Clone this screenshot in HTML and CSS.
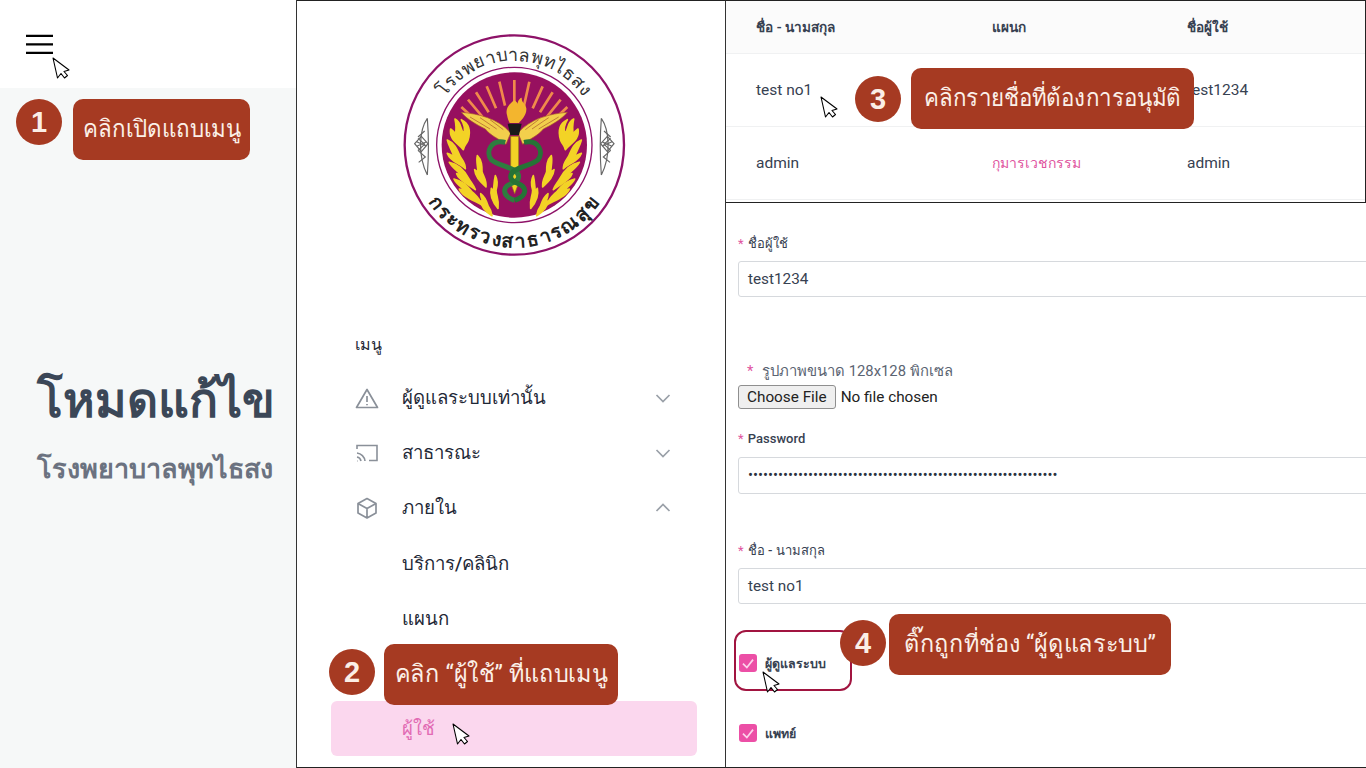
FILE: index.html
```html
<!DOCTYPE html>
<html lang="th">
<head>
<meta charset="utf-8">
<title>โหมดแก้ไข</title>
<link rel="stylesheet" href="styles.css">
</head>
<body>
<div class="page">
  <section class="left">
    <header class="left-top">
      <svg class="burger" viewBox="0 0 28 20"><path d="M0 2h28M0 11h28M0 19.700h28" stroke="#000" stroke-width="2.400" fill="none"/></svg>
    </header>
    <div class="left-body">
      <h1 class="mode-title">โหมดแก้ไข</h1>
      <p class="mode-sub">โรงพยาบาลพุทไธสง</p>
    </div>
  </section>

  <section class="middle">
    <div class="logo-wrap">
      <svg class="logo" viewBox="0 0 750 720">
        <defs>
          <path id="arcTop" d="M 120 360 A 253 253 0 0 1 626 360"/>
          <path id="arcBottom" d="M 62 390 A 313 313 0 0 0 684 390"/>
          <g id="flameSide" fill="#f3d326" stroke="#f3d326" stroke-width="5" stroke-linejoin="round">
            <path d="M195 282c22 12 14 32 27 44 4-18 0-30-8-42 24 12 28 36 20 62-6 14-12 14-14 28-14-18-44-30-38-62 6 4 12 10 14 16 4-16 2-32-1-46z"/>
            <path d="M172 345c20 8 28 26 36 44 4 12 18 20 18 42-16-16-44-20-54-46 8 2 14 6 20 10-6-18-16-32-20-50z"/>
            <path d="M178 412c30 6 46 26 58 48 6 12 14 18 20 34-20-16-50-28-56-48 8 2 14 6 20 10-14-16-32-26-42-44z"/>
            <path d="M262 392c14 14 14 32 14 48 4 14 14 24 12 46-14-14-32-28-34-52 4 2 8 6 10 10 0-18-6-34-2-52z"/>
            <path d="M192 462c26 6 40 20 52 36 12 12 24 20 32 42-24-14-60-26-68-48 6 0 14 4 20 8-12-14-28-20-36-38z"/>
            <path d="M316 452c8 14 6 30 2 44 0 18 10 26 6 54-12-14-26-34-20-60 2 2 4 6 6 10 2-16 2-32 6-48z"/>
            <path d="M272 506c14 10 18 24 22 36 6 8 10 16 12 30-14-8-32-24-34-44 4 2 6 4 8 8-2-10-8-18-8-30z"/>
          </g>
          <g id="charm">
            <path d="M112 280c-24 34-30 110 0 170M112 280c4 50 4 116 0 170" fill="none" stroke="#666" stroke-width="3.500"/>
            <path d="M74 356l20-22 20 22-20 24zM84 340l20 18-20 18M84 376l22 20-20 16M84 336l20-18M80 350l30 14M80 364l30-14" fill="none" stroke="#666" stroke-width="3.500"/>
          </g>
        </defs>
        <circle cx="373" cy="360" r="329" fill="#fff" stroke="#8e1268" stroke-width="7"/>
        <circle cx="373" cy="360" r="233" fill="#fff" stroke="#8e1268" stroke-width="4"/>
        <circle cx="373" cy="360" r="218" fill="#97105f"/>
        <path d="M373 240V165M345 242L328 170M318 250L290 184M296 262L258 202M278 276L234 224M262 290L214 246M402 242L418 170M428 250L458 184M450 262L488 202M470 276L512 224M486 290L532 246" stroke="#f08a4b" stroke-width="8" fill="none"/>
        <use href="#flameSide"/>
        <use href="#flameSide" transform="matrix(-1 0 0 1 746 0)"/>
        <path d="M214 262c50 4 110 18 148 62l-14 34c-26-20-44-24-62-46-28-14-54-28-72-50z" fill="#f2cf4c" stroke="#a8552b" stroke-width="2"/>
        <path d="M240 276l60 36M270 278l50 34M300 284l40 30" stroke="#a8552b" stroke-width="2" fill="none"/>
        <path d="M532 262c-50 4-110 18-148 62l14 34c26-20 44-24 62-46 28-14 54-28 72-50z" fill="#f2cf4c" stroke="#a8552b" stroke-width="2"/>
        <path d="M506 276l-60 36M476 278l-50 34M446 284l-40 30" stroke="#a8552b" stroke-width="2" fill="none"/>
        <path d="M373 226c-14 10-28 24-22 44 2 12 6 20 8 24h28c4-6 24-22 22-44-2-16-14-14-14-32-8 2-12 12-12 18-4-6-6-8-10-10z" fill="#f3b52e"/>
        <path d="M353 296h42l-8 34h-26z" fill="#1a1a1a"/>
        <path d="M362 334h24v140l-12 32-12-32z" fill="#f3d326" stroke="#8c7a17" stroke-width="2"/>
        <path d="M346 352c-44-10-60 30-42 52 20 20 80 22 82 50 2 24-46 18-42 46 2 16 24 24 30 26" fill="none" stroke="#2e7d3f" stroke-width="15"/>
        <path d="M402 352c44-10 60 30 42 52-20 20-80 22-82 50-2 24 46 18 42 46-2 16-24 24-30 26" fill="none" stroke="#267336" stroke-width="15"/>
        <use href="#charm"/>
        <use href="#charm" transform="matrix(-1 0 0 1 746 0)"/>
        <text class="logo-top"><textPath href="#arcTop" startOffset="50%">โรงพยาบาลพุทไธสง</textPath></text>
        <text class="logo-bottom"><textPath href="#arcBottom" startOffset="50%">กระทรวงสาธารณสุข</textPath></text>
      </svg>
    </div>
    <nav class="menu">
      <div class="menu-label">เมนู</div>
      <div class="menu-item">
        <svg class="ico" viewBox="0 0 24 24"><path d="M12 3.500 1.500 21.500h21zM12 10v6M12 18v1.200" fill="none" stroke="#8a9099" stroke-width="1.700" stroke-linejoin="round"/></svg>
        <span class="menu-text">ผู้ดูแลระบบเท่านั้น</span>
        <svg class="chev" viewBox="0 0 16 10"><path d="M1.500 2 8 8.500 14.500 2" fill="none" stroke="#9aa0a8" stroke-width="1.700"/></svg>
      </div>
      <div class="menu-item">
        <svg class="ico" viewBox="0 0 24 24"><path d="M2 8V4.500h20v15h-8M2 12a9 9 0 0 1 8 8M2 16a5 5 0 0 1 4 4M2 20h.5" fill="none" stroke="#8a9099" stroke-width="1.600"/></svg>
        <span class="menu-text">สาธารณะ</span>
        <svg class="chev" viewBox="0 0 16 10"><path d="M1.500 2 8 8.500 14.500 2" fill="none" stroke="#9aa0a8" stroke-width="1.700"/></svg>
      </div>
      <div class="menu-item">
        <svg class="ico" viewBox="0 0 24 24"><path d="M12 2.500 21 7.500v9.500l-9 5-9-5V7.500zM3 7.500l9 5 9-5M12 12.500V22" fill="none" stroke="#8a9099" stroke-width="1.700" stroke-linejoin="round"/></svg>
        <span class="menu-text">ภายใน</span>
        <svg class="chev" viewBox="0 0 16 10"><path d="M1.500 8 8 1.500 14.500 8" fill="none" stroke="#9aa0a8" stroke-width="1.700"/></svg>
      </div>
      <div class="menu-item sub"><span class="menu-text">บริการ/คลินิก</span></div>
      <div class="menu-item sub"><span class="menu-text">แผนก</span></div>
      <div class="menu-item sub"></div>
      <div class="menu-item sub active"><span class="menu-text">ผู้ใช้</span></div>
    </nav>
  </section>

  <section class="right">
    <div class="table-panel">
      <div class="t-row t-head"><span>ชื่อ - นามสกุล</span><span>แผนก</span><span>ชื่อผู้ใช้</span></div>
      <div class="t-row"><span>test no1</span><span></span><span>test1234</span></div>
      <div class="t-row"><span>admin</span><span class="pink">กุมารเวชกรรม</span><span>admin</span></div>
    </div>
    <form class="form-panel">
      <div class="f-label name-label"><b>*</b> ชื่อผู้ใช้</div>
      <div class="f-input">test1234</div>
      <div class="f-hint"><b>*</b> รูปภาพขนาด 128x128 พิกเซล</div>
      <div class="f-file"><span class="file-btn">Choose File</span><span>No file chosen</span></div>
      <div class="f-label pass-label"><b>*</b> Password</div>
      <div class="f-input pass-input">••••••••••••••••••••••••••••••••••••••••••••••••••••••••••••••</div>
      <div class="f-label full-label"><b>*</b> ชื่อ - นามสกุล</div>
      <div class="f-input">test no1</div>
      <div class="f-check admin-check"><span class="box"><svg viewBox="0 0 16 16"><path d="M3.500 8.500 7 12l5.500-7" fill="none" stroke="#fbd5ec" stroke-width="1.500"/></svg></span><span>ผู้ดูแลระบบ</span></div>
      <div class="f-check doctor-check"><span class="box"><svg viewBox="0 0 16 16"><path d="M3.500 8.500 7 12l5.500-7" fill="none" stroke="#fbd5ec" stroke-width="1.500"/></svg></span><span>แพทย์</span></div>
    </form>
  </section>

  <div class="num n1">1</div>
  <div class="tip t1"><span class="tip-text">คลิกเปิดแถบเมนู</span></div>
  <div class="num n2">2</div>
  <div class="tip t2"><span class="tip-text">คลิก “ผู้ใช้” ที่แถบเมนู</span></div>
  <div class="num n3">3</div>
  <div class="tip t3"><span class="tip-text">คลิกรายชื่อที่ต้องการอนุมัติ</span></div>
  <div class="num n4">4</div>
  <div class="tip t4"><span class="tip-text">ติ๊กถูกที่ช่อง “ผู้ดูแลระบบ”</span></div>
  <div class="ring"></div>

  <svg class="cur c1" viewBox="0 0 18 24"><path d="M1 1 5.500 21 9 16.500l3.500 4.500 3-2.500-3.500-4 5-1.500z" fill="#fff" stroke="#000" stroke-width="1.100" stroke-linejoin="round"/></svg>
  <svg class="cur c2" viewBox="0 0 18 24"><path d="M1 1 5.500 21 9 16.500l3.500 4.500 3-2.500-3.500-4 5-1.500z" fill="#fff" stroke="#000" stroke-width="1.100" stroke-linejoin="round"/></svg>
  <svg class="cur c3" viewBox="0 0 18 24"><path d="M1 1 5.500 21 9 16.500l3.500 4.500 3-2.500-3.500-4 5-1.500z" fill="#fff" stroke="#000" stroke-width="1.100" stroke-linejoin="round"/></svg>
  <svg class="cur c4" viewBox="0 0 18 24"><path d="M1 1 5.500 21 9 16.500l3.500 4.500 3-2.500-3.500-4 5-1.500z" fill="#fff" stroke="#000" stroke-width="1.100" stroke-linejoin="round"/></svg>
</div>
</body>
</html>
```

FILE: styles.css
```css
* { box-sizing: border-box; }
html, body { margin: 0; padding: 0; background: #fff; }
body { font-family: Roboto, "Noto Sans", "DejaVu Sans", sans-serif; color: #374151; }
.page {
  position: relative;
  width: 1366px;
  height: 768px;
  overflow: hidden;
  display: grid;
  grid-template-columns: 297px 429px 640px;
}

/* left */
.left { display: flex; flex-direction: column; border-right: 1px solid #333; }
.left-top { height: 88px; background: #fff; padding: 33px 0 0 26px; }
.burger { display: block; width: 27px; height: 21px; }
.left-body { flex: 1; background: #f6f8f8; display: flex; flex-direction: column; padding: 280px 0 0 37px; }
.mode-title { margin: 0; font-size: 48px; line-height: 66px; font-weight: 700; color: #3b4757; white-space: nowrap; }
.mode-sub { margin: 17px 0 0; font-size: 27px; line-height: 36px; font-weight: 700; color: #6b7280; white-space: nowrap; }

/* middle */
.middle { border-top: 1px solid #222; border-bottom: 1px solid #222; border-right: 1px solid #333; display: flex; flex-direction: column; background: #fff; }
.logo-wrap { height: 256px; padding: 24px 0 0 93px; }
.logo { display: block; width: 250px; height: 240px; }
.logo-top { font-size: 54px; font-weight: 500; fill: #333; text-anchor: middle; letter-spacing: 1px; font-family: "Noto Sans", "DejaVu Sans", sans-serif; }
.logo-bottom { font-size: 58px; font-weight: 700; fill: #222; text-anchor: middle; letter-spacing: 6px; font-family: "Noto Sans", "DejaVu Sans", sans-serif; }
.menu { padding: 75px 28px 0 34px; }
.menu-label { font-size: 16px; line-height: 26px; padding-left: 24px; color: #1f2937; margin-bottom: 12px; }
.menu-item { height: 55.2px; display: flex; align-items: center; padding: 0 26px 0 24px; border-radius: 6px; }
.ico { width: 24px; height: 24px; flex: none; margin-right: 23px; }
.chev { width: 16px; height: 10px; margin-left: auto; flex: none; }
.menu-text { font-size: 18.600px; font-weight: 500; color: #1f2937; white-space: nowrap; }
.sub { padding-left: 71px; }
.active { background: #fbd7ee; }
.active .menu-text { color: #e26bb4; }

/* right */
.right { display: flex; flex-direction: column; }
.table-panel { height: 203px; border-top: 1px solid #222; border-right: 1px solid #222; border-bottom: 1px solid #222; background: #fff; }
.t-row { display: grid; grid-template-columns: 236px 195px 1fr; align-items: center; height: 73px; padding-left: 30px; border-bottom: 1px solid #f0f1f2; font-size: 15.500px; color: #374151; }
.t-head { height: 53px; background: #fbfbfb; font-size: 13.600px; font-weight: 700; color: #374151; }
.pink { color: #e0559f; font-size: 14px; }
.form-panel { flex: 1; padding: 31px 0 0 12px; border-bottom: 1px solid #222; position: relative; overflow: hidden; }
.f-label { font-size: 13px; line-height: 20px; font-weight: 500; color: #374151; white-space: nowrap; }
.f-label b, .f-hint b { color: #e0559f; font-weight: 400; }
.f-label b { margin-right: 1px; }
.f-input { width: 660px; height: 36px; border: 1px solid #d6d9dd; border-radius: 3px; margin-top: 7px; padding-left: 9px; font-size: 15.300px; line-height: 34px; color: #374151; white-space: nowrap; overflow: hidden; }
.pass-input { height: 37px; margin-top: 8px; font-size: 14.800px; line-height: 34px; letter-spacing: 0; color: #2a3240; }
.f-hint { font-size: 14.800px; line-height: 20px; padding-left: 9px; margin-top: 64px; color: #5b6472; white-space: nowrap; }
.f-hint b { margin-right: 5px; }
.f-file { display: flex; align-items: center; gap: 5px; margin-top: 4px; font-size: 15.300px; color: #222; height: 24px; }
.file-btn { display: inline-block; height: 24px; line-height: 22px; padding: 0 8px; border: 1px solid #8f8f8f; border-radius: 3px; background: #efefef; }
.pass-label { margin-top: 20px; }
.full-label { margin-top: 47px; }
.f-check { display: flex; align-items: center; gap: 8px; font-size: 12.400px; font-weight: 700; color: #374151; height: 18px; }
.admin-check { margin: 50px 0 0 1px; }
.doctor-check { margin: 52px 0 0 1px; }
.box { width: 18px; height: 18px; background: #ec4fa6; border-radius: 3px; display: block; }
.box svg { display: block; width: 18px; height: 18px; }

/* overlays */
.num {
  position: absolute; width: 46px; height: 46px; border-radius: 50%;
  background: #a63a22; color: #fbeee6; font: 700 29px/46px "Liberation Sans", Arial, sans-serif; text-align: center;
}
.tip {
  position: absolute; height: 61px; border-radius: 10px; background: #a63a22; color: #fbf0e8;
  font-size: 24px; line-height: 61px; text-align: center; white-space: nowrap;
  display: flex; justify-content: center;
}
.tip-text { display: block; transform: scaleX(.93); }
.t2 .tip-text, .t4 .tip-text { transform: scaleX(.975); }
.n1 { left: 16px; top: 99px; }
.t1 { left: 73px; top: 99px; width: 177px; }
.n2 { left: 329px; top: 649px; }
.t2 { left: 384px; top: 644px; width: 234px; }
.n3 { left: 855px; top: 76px; }
.t3 { left: 911px; top: 68px; width: 283px; }
.n4 { left: 840px; top: 620px; }
.t4 { left: 889px; top: 614px; width: 282px; }
.ring { position: absolute; left: 734px; top: 630px; width: 118px; height: 61px; border: 2px solid #a11440; border-radius: 12px; }
.num.n4 { z-index: 1; }
.cur { position: absolute; width: 18px; height: 24px; }
.c1 { left: 52px; top: 57px; }
.c2 { left: 452px; top: 723px; }
.c3 { left: 820px; top: 96px; }
.c4 { left: 762px; top: 671px; }
```
